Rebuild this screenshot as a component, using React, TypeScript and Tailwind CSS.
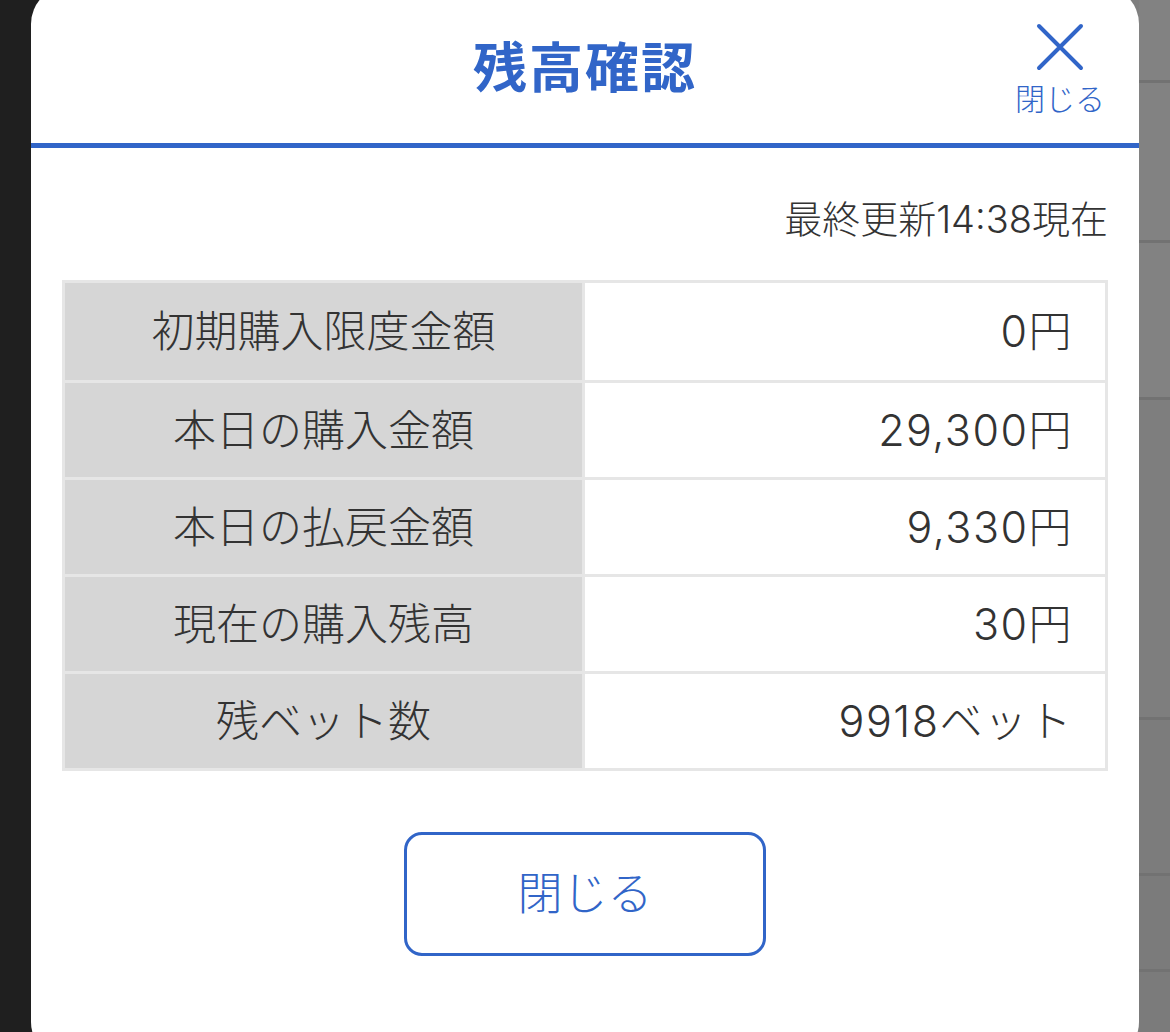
import React from 'react';

const rows = [
  { label: '初期購入限度金額', value: '0円' },
  { label: '本日の購入金額', value: '29,300円' },
  { label: '本日の払戻金額', value: '9,330円' },
  { label: '現在の購入残高', value: '30円' },
  { label: '残ベット数', value: '9918ベット' },
];

const font = { fontFamily: 'Inter, "Noto Sans CJK JP", sans-serif' };

export default function App() {
  return (
    <div
      className="flex h-[1032px] w-[1170px] overflow-hidden bg-[linear-gradient(to_right,#1f1f1f_50%,#7f7f7f_50%)] text-[#333333]"
      style={font}
    >
      <div className="w-[31px] shrink-0 bg-[#1f1f1f]" />

      {/* Modal */}
      <div className="-mt-[14px] flex h-[1074px] w-[1108px] shrink-0 flex-col rounded-[38px] bg-white">
        {/* Header */}
        <div className="relative flex h-[162px] shrink-0 items-center justify-center border-b-[5px] border-[#3165c8] pt-[8px]">
          <h1 className="text-[54px] font-bold leading-none tracking-[2px] text-[#3165c8]">残高確認</h1>
          <button className="absolute right-[33px] top-[36px] flex w-[92px] flex-col items-center text-[#3165c8]">
            <svg width="50" height="50" viewBox="0 0 50 50" fill="none" stroke="#3165c8" strokeWidth="4" strokeLinecap="round">
              <path d="M4 4 L46 46 M46 4 L4 46" />
            </svg>
            <span className="mt-[12px] text-[30px] font-light leading-none">閉じる</span>
          </button>
        </div>

        {/* Body */}
        <div className="flex flex-col px-[31px]">
          <p className="mt-[52px] text-right text-[38px] font-light leading-none">最終更新14:38現在</p>

          <div className="mt-[42px] border-[3px] border-[#e6e6e6]">
            {rows.map((r, i) => (
              <div
                key={r.label}
                className={`grid h-[97px] grid-cols-[520px_1fr] ${i > 0 ? 'border-t-[3px] border-[#e6e6e6]' : ''}`}
              >
                <div className="flex items-center justify-center border-r-[3px] border-[#e6e6e6] bg-[#d6d6d6] text-[43px] font-light">
                  {r.label}
                </div>
                <div className="flex items-center justify-end pr-[32px] text-[43px] font-light tracking-[1.5px]">
                  {r.value}
                </div>
              </div>
            ))}
          </div>

          <div className="mt-[61px] flex justify-center">
            <button className="flex h-[124px] w-[362px] items-center justify-center rounded-[18px] border-[3px] border-[#3165c8] text-[45px] font-light text-[#3165c8]">
              閉じる
            </button>
          </div>
        </div>
      </div>

      {/* Background list on the right */}
      <div className="flex flex-1 flex-col bg-[#7f7f7f]">
        <div className="h-[83px] border-b-[3px] border-[#727272] bg-[#828282]" />
        <div className="h-[160px] border-b-[3px] border-[#727272] bg-[#828282]" />
        <div className="h-[157px] border-b-[3px] border-[#727272] bg-[#828282]" />
        <div className="h-[320px] border-b-[3px] border-[#727272] bg-[#7e7e7e]" />
        <div className="h-[156px] border-b-[3px] border-[#727272] bg-[#7c7c7c]" />
        <div className="h-[96px] border-b-[3px] border-[#727272] bg-[#7b7b7b]" />
        <div className="flex-1 bg-[#7b7b7b]" />
      </div>
    </div>
  );
}
